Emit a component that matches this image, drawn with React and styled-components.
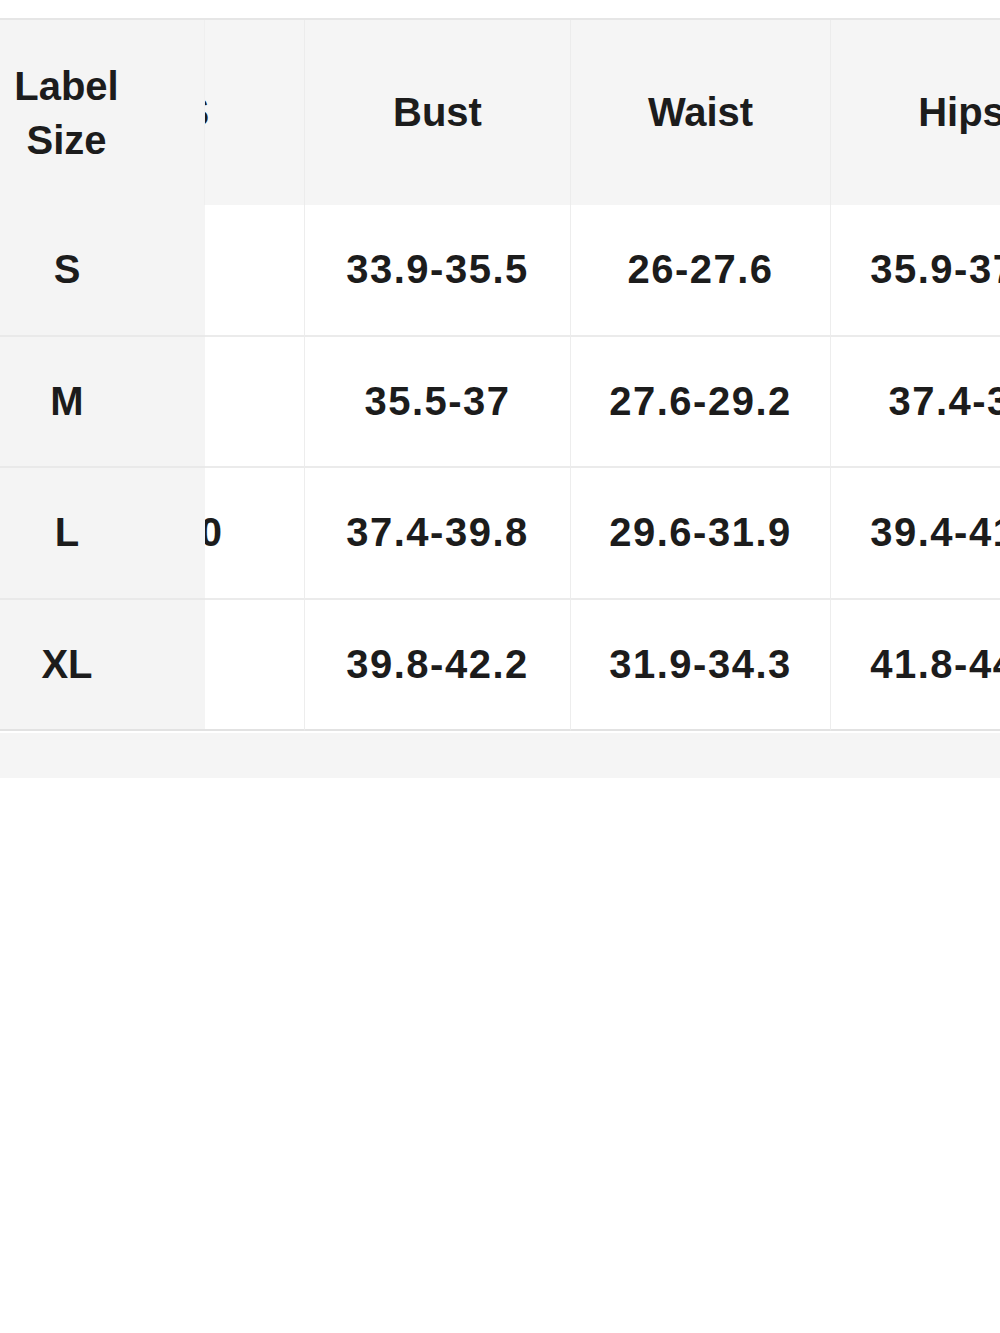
import React, { useLayoutEffect, useRef } from "react";
import styled, { createGlobalStyle } from "styled-components";

// size chart, scrolled sideways so the first data column sits under the sticky label column

const sizes = [
    { label: "S", us: "4", bust: "33.9-35.5", waist: "26-27.6", hips: "35.9-37.4" },
    { label: "M", us: "6", bust: "35.5-37", waist: "27.6-29.2", hips: "37.4-39" },
    { label: "L", us: "8/10", bust: "37.4-39.8", waist: "29.6-31.9", hips: "39.4-41.8" },
    { label: "XL", us: "12", bust: "39.8-42.2", waist: "31.9-34.3", hips: "41.8-44.2" },
];

export default function App() {
    const scroller = useRef(null);

    useLayoutEffect(() => {
        if (scroller.current) scroller.current.scrollLeft = 146;
    }, []);

    return (
        <Page>
            <GlobalStyle />
            <TopGap />
            <Scroller ref={scroller}>
                <Table>
                    <colgroup>
                        <col style={{ width: 205 }} />
                        <col style={{ width: 246 }} />
                        <col style={{ width: 266 }} />
                        <col style={{ width: 260 }} />
                        <col style={{ width: 262 }} />
                    </colgroup>
                    <thead>
                        <tr>
                            <LabelHead>Label<br />Size</LabelHead>
                            <Head>US</Head>
                            <Head>Bust</Head>
                            <Head>Waist</Head>
                            <Head>Hips</Head>
                        </tr>
                    </thead>
                    <tbody>
                        {sizes.map((s) => (
                            <tr key={s.label}>
                                <LabelCell>{s.label}</LabelCell>
                                <Cell>{s.us}</Cell>
                                <Cell>{s.bust}</Cell>
                                <Cell>{s.waist}</Cell>
                                <Cell>{s.hips}</Cell>
                            </tr>
                        ))}
                    </tbody>
                </Table>
            </Scroller>
            <Strip />
        </Page>
    );
}

const GlobalStyle = createGlobalStyle`
body{
    margin: 0;
    background: #FFFFFF;
    font-family: 'Liberation Sans', Arial, sans-serif;
}
`

const Page = styled.div`
width: 1000px;
min-height: 1333px;
background: #FFFFFF;
overflow: hidden;
`

const TopGap = styled.div`
height: 18px;
`

const Scroller = styled.div`
width: 1000px;
overflow-x: auto;
border-top: 2px solid #E6E6E6;
scrollbar-width: none;

&::-webkit-scrollbar{
    display: none;
}
`

const Table = styled.table`
border-collapse: separate;
border-spacing: 0;
table-layout: fixed;
width: 1239px;
color: #1C1C1C;
font-family: 'Liberation Sans', Arial, sans-serif;
font-weight: 700;
font-size: 40px;

tbody tr:last-child td{
    border-bottom-color: #E2E2E2;
}
`

const Head = styled.th`
height: 185px;
padding: 0;
background: #F5F5F5;
border-right: 1px solid #ECECEC;
font-weight: 700;
text-align: center;
vertical-align: middle;
`

const LabelHead = styled(Head)`
position: sticky;
left: 0;
z-index: 2;
padding-right: 71px;
line-height: 54px;
background: #F4F4F4;
border-right: 1px solid #EFEFEF;
`

const Cell = styled.td`
height: 129.5px;
padding: 0;
background: #FFFFFF;
border-right: 1px solid #EDEDED;
border-bottom: 2px solid #EBEBEB;
text-align: center;
vertical-align: middle;
letter-spacing: 1.5px;
`

const LabelCell = styled(Cell)`
position: sticky;
left: 0;
z-index: 2;
padding-right: 71px;
background: #F4F4F4;
border-right: none;
border-bottom-color: #E9E9E9;
letter-spacing: 0;
`

const Strip = styled.div`
height: 45px;
margin-top: 2px;
background: #F5F5F5;
`
